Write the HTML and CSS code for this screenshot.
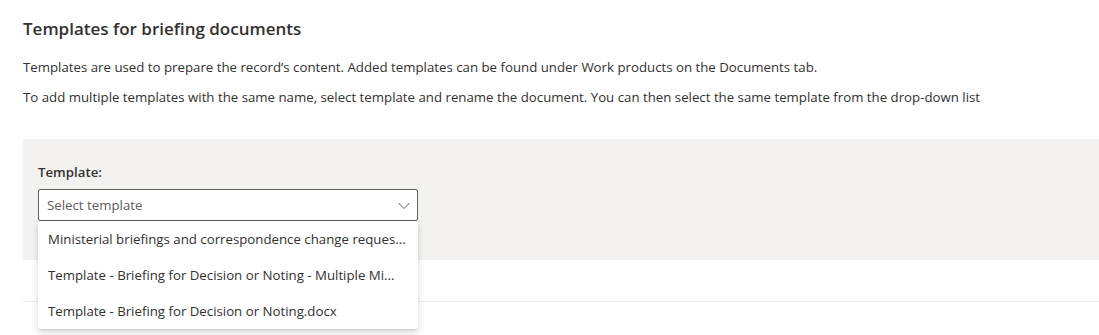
FILE: index.html
```html
<!DOCTYPE html>
<html lang="en">
<head>
<meta charset="utf-8">
<title>Templates for briefing documents</title>
<link rel="stylesheet" href="styles.css">
</head>
<body>
<div class="page">
  <h2 class="title">Templates for briefing documents</h2>
  <p class="desc">Templates are used to prepare the record’s content. Added templates can be found under Work products on the Documents tab.</p>
  <p class="desc">To add multiple templates with the same name, select template and rename the document. You can then select the same template from the drop-down list</p>
  <div class="panel">
    <label class="label">Template:</label>
    <div class="dropdown">
      <div class="select">
        <span class="placeholder">Select template</span>
        <svg class="chev" width="12" height="8" viewBox="0 0 12 8"><path d="M0.5 1 L6 6.5 L11.5 1" fill="none" stroke="#605e5c" stroke-width="1"/></svg>
      </div>
      <ul class="menu">
        <li class="item">Ministerial briefings and correspondence change reques...</li>
        <li class="item">Template - Briefing for Decision or Noting - Multiple Mi...</li>
        <li class="item">Template - Briefing for Decision or Noting.docx</li>
      </ul>
    </div>
  </div>
  <div class="spacer"></div>
  <div class="divider"></div>
</div>
</body>
</html>
```
FILE: styles.css
```css
* { box-sizing: border-box; }
html, body { margin: 0; padding: 0; background: #fff; }
body {
  font-family: "Open Sans", "Noto Sans", "Liberation Sans", sans-serif;
  color: #323130;
  font-size: 13.25px;
  min-height: 335px;
}
.page { padding: 17px 0 40px 23px; }
.title {
  margin: 0;
  font-size: 17px;
  line-height: 24px;
  font-weight: 600;
}
.desc {
  margin: 0;
  font-size: 13.25px;
  line-height: 20px;
}
.title + .desc { margin-top: 16px; }
.desc + .desc { margin-top: 10px; }
.panel {
  margin-top: 32px;
  background: #f3f2f1;
  padding: 23px 0 39px 15px;
}
.label {
  display: block;
  font-weight: 600;
  line-height: 20px;
  margin-bottom: 7px;
}
.dropdown { position: relative; width: 380px; }
.select {
  height: 32px;
  border: 1px solid #605e5c;
  border-radius: 2px;
  background: #fff;
  display: flex;
  align-items: center;
  justify-content: space-between;
  padding: 0 7px 0 8px;
}
.placeholder { color: #605e5c; }
.chev { display: block; margin-top: 1px; }
.menu {
  position: absolute;
  top: 32px;
  left: 0;
  width: 380px;
  margin: 0;
  padding: 0;
  list-style: none;
  background: #fff;
  border-radius: 2px;
  box-shadow: 0 3.2px 7.2px rgba(0,0,0,.132), 0 0.6px 1.8px rgba(0,0,0,.108);
  z-index: 2;
}
.item {
  height: 36px;
  line-height: 36px;
  padding: 0 10px;
  white-space: nowrap;
}
.spacer { height: 41px; }
.divider { height: 1px; background: #edebe9; }
```
